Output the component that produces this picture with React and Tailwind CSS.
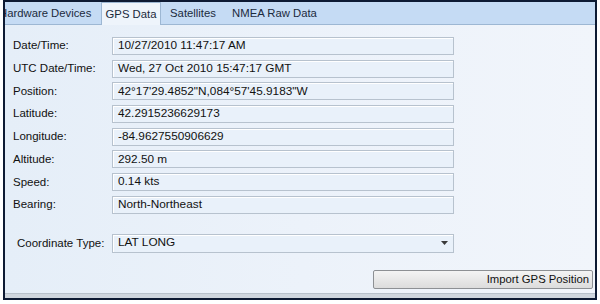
import React from 'react';

const rows = [
  { label: 'Date/Time:', value: '10/27/2010 11:47:17 AM', pad: 'pl-0' },
  { label: 'UTC Date/Time:', value: 'Wed, 27 Oct 2010 15:47:17 GMT', pad: 'pl-[4px]' },
  { label: 'Position:', value: '42°17\'29.4852"N,084°57\'45.9183"W', pad: 'pl-0' },
  { label: 'Latitude:', value: '42.2915236629173', pad: 'pl-0' },
  { label: 'Longitude:', value: '-84.9627550906629', pad: 'pl-[3px]' },
  { label: 'Altitude:', value: '292.50 m', pad: 'pl-0' },
  { label: 'Speed:', value: '0.14 kts', pad: 'pl-[1px]' },
  { label: 'Bearing:', value: 'North-Northeast', pad: 'pl-[3px]' },
];

const tabs = [
  { name: 'Hardware Devices', w: 'w-[106px] justify-start pl-[4px]', active: false },
  { name: 'GPS Data', w: 'w-[60px] justify-center', active: true },
  { name: 'Satellites', w: 'w-[64px] justify-center', active: false },
  { name: 'NMEA Raw Data', w: 'w-[99px] justify-center', active: false },
];

const Field = ({ children }) => (
  <div className="w-[342px] h-[18px] border border-[#b7c2ce] bg-[#e9f1fa] shadow-[inset_1px_1px_0_#ffffff] flex items-center pl-[5px] text-[11.8px] text-[#111]">
    {children}
  </div>
);

const App = () => {
  return (
    <div className="w-[600px] h-[304px] bg-white font-['Liberation_Sans',Arial,sans-serif] text-[11.5px]">
      <div className="ml-[3px] w-[594px] h-[300px] border-2 border-[#0d1a33] flex flex-col overflow-hidden">
        {/* tab strip */}
        <div className="h-[23px] bg-[#c5dbf4] border-b border-[#9db7d3] flex items-end shrink-0">
          <div className="flex -ml-[10px] h-full">
            {tabs.map((t) => (
              <div
                key={t.name}
                className={
                  t.active
                    ? `${t.w} shrink-0 h-[24px] -mb-px bg-[#eef4fb] border border-b-0 border-[#9db7d3] flex items-center text-[11.3px] text-[#1b2a3d]`
                    : `${t.w} shrink-0 h-full flex items-center text-[11.3px] text-[#1b2a3d]`
                }
              >
                {t.name}
              </div>
            ))}
          </div>
        </div>

        {/* content */}
        <div className="flex-1 bg-gradient-to-r from-[#e5eef8] via-[#ecf2fa] to-[#f1f5fb] pt-[12px] flex flex-col">
          <div className="flex flex-col gap-[4.7px]">
            {rows.map((r) => (
              <div key={r.label} className="flex items-center">
                <div className={`w-[107px] pl-[8px] ${r.pad} text-[#111]`}>{r.label}</div>
                <Field>{r.value}</Field>
              </div>
            ))}
          </div>

          <div className="flex items-center mt-[20px]">
            <div className="w-[107px] pl-[12px] text-[#111]">Coordinate Type:</div>
            <div className="w-[342px] h-[19px] border border-[#b7c2ce] bg-[#e9f1fa] shadow-[inset_1px_1px_0_#ffffff] flex items-center justify-between pl-[5px] pr-[5px] text-[11.8px] text-[#111]">
              <span>LAT LONG</span>
              <svg width="7" height="4" viewBox="0 0 7 4">
                <path d="M0 0 L7 0 L3.5 4 Z" fill="#3a3a3a" />
              </svg>
            </div>
          </div>

          <div className="flex justify-end mt-[17px] pr-[2px]">
            <div className="w-[220px] h-[19px] rounded-[2px] border border-[#8d9094] bg-gradient-to-b from-[#f4f4f4] to-[#dcdcdc] flex items-center justify-end pr-[3px] text-[11.3px] text-[#111]">
              Import GPS Position
            </div>
          </div>
        </div>

        {/* bottom band */}
        <div className="h-[5px] shrink-0 bg-[#cfd6de] border-t border-[#b8c1cb]" />
      </div>
    </div>
  );
};

export default App;
